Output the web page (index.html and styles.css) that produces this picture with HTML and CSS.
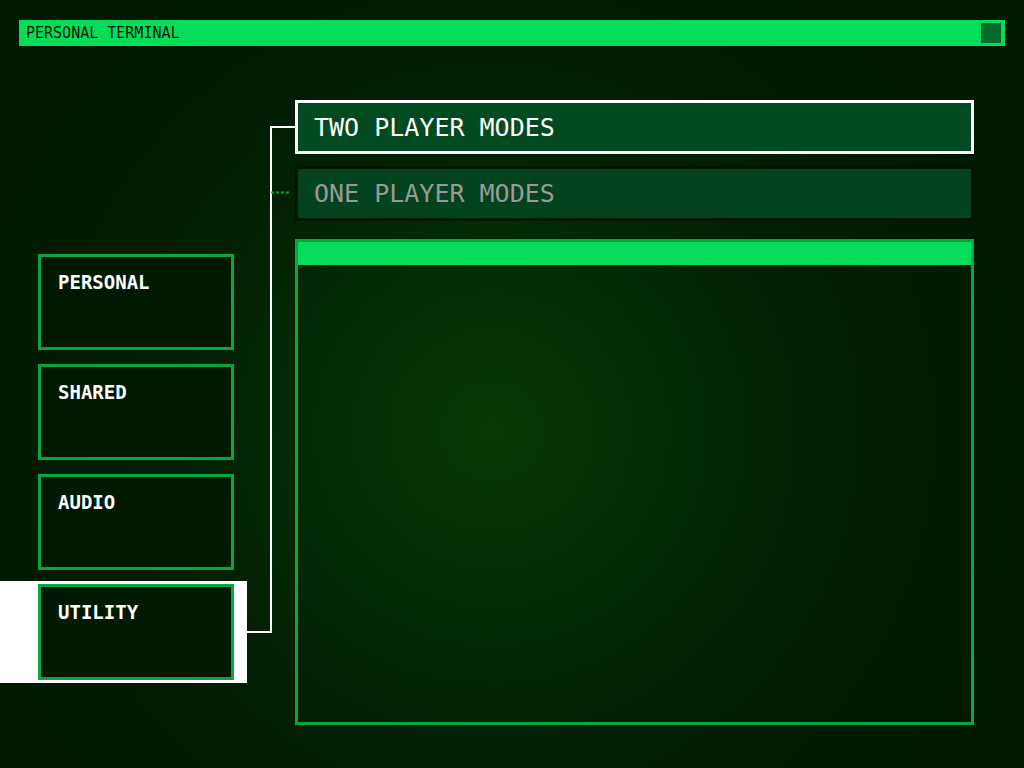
FILE: index.html
```html
<!DOCTYPE html>
<html>
<head>
<meta charset="utf-8">
<title>Personal Terminal</title>
<link rel="stylesheet" href="styles.css">
</head>
<body>
  <header class="titlebar">
    <span class="title">PERSONAL TERMINAL</span>
    <span class="close-box"></span>
  </header>
  <div class="layout">
    <nav class="menu">
      <div class="menu-slot"><div class="menu-item">PERSONAL</div></div>
      <div class="menu-slot"><div class="menu-item">SHARED</div></div>
      <div class="menu-slot"><div class="menu-item">AUDIO</div></div>
      <div class="menu-slot selected"><div class="menu-item">UTILITY</div></div>
    </nav>
    <div class="wires">
      <svg width="48" height="540" viewBox="0 0 48 540">
        <path d="M24 27H48M24 26V533M0 532H25" fill="none" stroke="#ffffff" stroke-width="2"/>
        <path d="M24 92.5H44" fill="none" stroke="#0aa540" stroke-width="2" stroke-dasharray="3 2"/>
      </svg>
    </div>
    <main class="content">
      <div class="tab active">TWO PLAYER MODES</div>
      <div class="tab">ONE PLAYER MODES</div>
      <section class="panel">
        <div class="panel-head"></div>
      </section>
    </main>
  </div>
</body>
</html>
```
FILE: styles.css
```css
html, body {
  margin: 0;
  padding: 0;
}
body {
  width: 1024px;
  height: 768px;
  overflow: hidden;
  background: radial-gradient(circle at 48% 56%, #053907 0, #031f04 330px, #001a02 520px);
  background-color: #001a02;
  font-family: "DejaVu Sans Mono", "Liberation Mono", monospace;
}
.titlebar {
  margin: 20px 19px 0;
  height: 26px;
  background: #05dd5a;
  display: flex;
  align-items: center;
  justify-content: space-between;
  padding: 0 4px 0 7px;
}
.title {
  font-size: 15px;
  color: #001a02;
  line-height: 18px;
}
.close-box {
  width: 20px;
  height: 20px;
  background: #036b2e;
}
.layout {
  display: flex;
  margin-top: 54px;
}
.menu {
  width: 247px;
  display: flex;
  flex-direction: column;
  gap: 8px;
  padding-top: 151px;
}
.menu-slot {
  padding: 3px 13px 3px 38px;
}
.menu-slot.selected {
  background: #ffffff;
}
.menu-item {
  box-sizing: border-box;
  height: 96px;
  border: 3px solid #0aa540;
  background: #001a02;
  padding: 14px 17px;
  color: #ffffff;
  font-weight: bold;
  font-size: 19px;
  line-height: 22px;
}
.wires {
  width: 48px;
}
.wires svg {
  display: block;
}
.content {
  width: 679px;
  display: flex;
  flex-direction: column;
}
.tab {
  box-sizing: border-box;
  height: 55px;
  border: 3px solid #001500;
  background: #03431f;
  color: #9a9a9a;
  font-size: 25px;
  display: flex;
  align-items: center;
  padding-left: 16px;
  margin-top: 12px;
}
.tab.active {
  height: 54px;
  border-color: #ffffff;
  background: #024a1f;
  color: #ffffff;
  margin-top: 0;
}
.panel {
  box-sizing: border-box;
  margin-top: 18px;
  height: 486px;
  border: 3px solid #0aa540;
}
.panel-head {
  height: 23px;
  background: #05dd5a;
}
```
